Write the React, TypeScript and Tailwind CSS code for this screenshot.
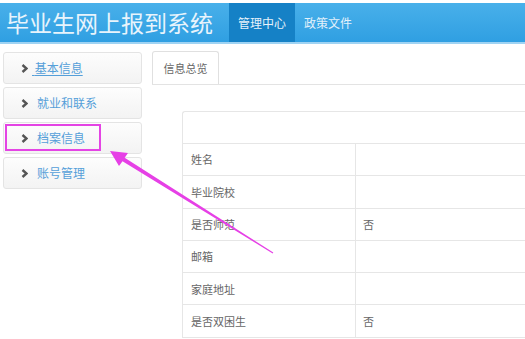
import React from "react";

const font = { fontFamily: '"Noto Sans CJK SC", "Noto Sans", sans-serif' };

function Chevron() {
  return (
    <svg width="7" height="9" viewBox="0 0 7 9" className="shrink-0">
      <path d="M1.5 1 L5.5 4.5 L1.5 8" fill="none" stroke="#555555" strokeWidth="2.4" />
    </svg>
  );
}

const items = ["基本信息", "就业和联系", "档案信息", "账号管理"];
const rows: [string, string][] = [
  ["姓名", ""],
  ["毕业院校", ""],
  ["是否师范", "否"],
  ["邮箱", ""],
  ["家庭地址", ""],
  ["是否双困生", "否"],
];

export default function App() {
  return (
    <div className="relative w-[525px] h-[339px] overflow-hidden bg-white" style={font}>
      <div className="pt-[3px]">
        <div className="h-[39px] flex items-stretch bg-gradient-to-b from-[#48b0ea] to-[#2f9fe2]">
          <div className="pl-[6px] pr-[16px] flex items-center text-[23px] leading-none text-[#e8f4fc]">
            毕业生网上报到系统
          </div>
          <div className="w-[66px] bg-[#1581c6] flex items-center justify-center text-[12px] text-[#e6f2fb]">
            管理中心
          </div>
          <div className="pl-[9px] flex items-center text-[12px] text-[#e3f1fb]">政策文件</div>
        </div>
        <div className="h-[2px] bg-[#9fd3f3]" />
      </div>
      <div className="flex">
        <div className="pl-[3px] pt-[8px] w-[142px] flex flex-col gap-[3px] shrink-0">
          {items.map((t, i) => (
            <div
              key={t}
              className="h-[32px] rounded-[3px] border border-[#e4e4e4] bg-gradient-to-b from-[#fdfdfd] to-[#f3f3f3] flex items-center pl-[17px] text-[12px] text-[#559fd9]"
            >
              <Chevron />
              {i === 0 ? (
                <span className="ml-[4px] underline underline-offset-2">&nbsp;{t}</span>
              ) : (
                <span className="ml-[9px]">{t}</span>
              )}
            </div>
          ))}
        </div>
        <div className="flex-1 pl-[10px] pt-[8px] min-w-0">
          <div className="h-[33px] border-b border-[#e3e3e3] flex items-end">
            <div className="h-[33px] w-[67px] border border-b-0 border-[#e0e0e0] rounded-t-[3px] flex items-center justify-center text-[11px] text-[#666]">
              信息总览
            </div>
          </div>
          <div className="ml-[30px] mt-[26px] w-[360px] border-l border-t border-[#e6e6e6] rounded-tl-[3px]">
            <div className="h-[32px] border-b border-[#e6e6e6]" />
            {rows.map(([k, v]) => (
              <div key={k} className="h-[32.3px] border-b border-[#e6e6e6] flex text-[11px] text-[#666]">
                <div className="w-[173px] border-r border-[#e6e6e6] flex items-center pl-[8px]">{k}</div>
                <div className="flex-1 flex items-center pl-[7px]">{v}</div>
              </div>
            ))}
          </div>
        </div>
      </div>
      <div className="absolute left-[5px] top-[124px] w-[96px] h-[27px] border-2 border-[#e444e4]" />
      <svg className="absolute left-0 top-0" width="525" height="339" viewBox="0 0 525 339">
        <polygon points="110,151 128,153 124.7,157.8 273.3,252.5 272.7,253.5 122.5,161.2 119,166" fill="#e640e6" />
      </svg>
    </div>
  );
}
